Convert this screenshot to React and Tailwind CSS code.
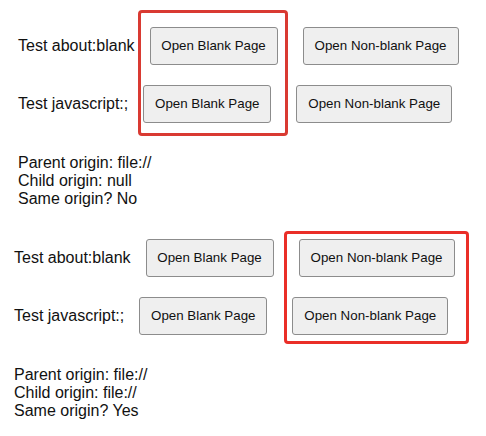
const btn =
  'h-[38px] rounded-[3px] border border-[#8c8c8c] bg-[#efefef] text-[13.33px] text-[#111] flex items-center justify-center shrink-0'

function TestRow({ label, className = '' }) {
  return (
    <div className={`flex items-center h-[38px] ${className}`}>
      <span className="mr-[15px]">{label}</span>
      <button className={`${btn} w-[128px] mr-[25px]`}>Open Blank Page</button>
      <button className={`${btn} w-[156px]`}>Open Non-blank Page</button>
    </div>
  )
}

function Section({ child, same, className = '' }) {
  return (
    <div className={className}>
      <TestRow label="Test about:blank" />
      <TestRow label="Test javascript:;" className="mt-[20px]" />
      <div className="mt-[31px] leading-[18px]">
        <div>Parent origin: file://</div>
        <div>Child origin: {child}</div>
        <div>Same origin? {same}</div>
      </div>
    </div>
  )
}

export default function App() {
  return (
    <div className="relative w-[486px] h-[436px] overflow-hidden bg-white text-[16px] text-[#111] font-['Liberation_Sans',Arial,sans-serif]">
      <Section child="null" same="No" className="pt-[27px] pl-[18px]" />
      <Section child="file://" same="Yes" className="mt-[31px] pl-[14px]" />

      {/* highlight boxes */}
      <div className="absolute left-[138px] top-[10px] w-[150px] h-[126px] border-[3px] border-[#d93a32] rounded-[4px]" />
      <div className="absolute left-[284px] top-[231px] w-[185px] h-[113px] border-[3px] border-[#ea2e28] rounded-[4px]" />
    </div>
  )
}
